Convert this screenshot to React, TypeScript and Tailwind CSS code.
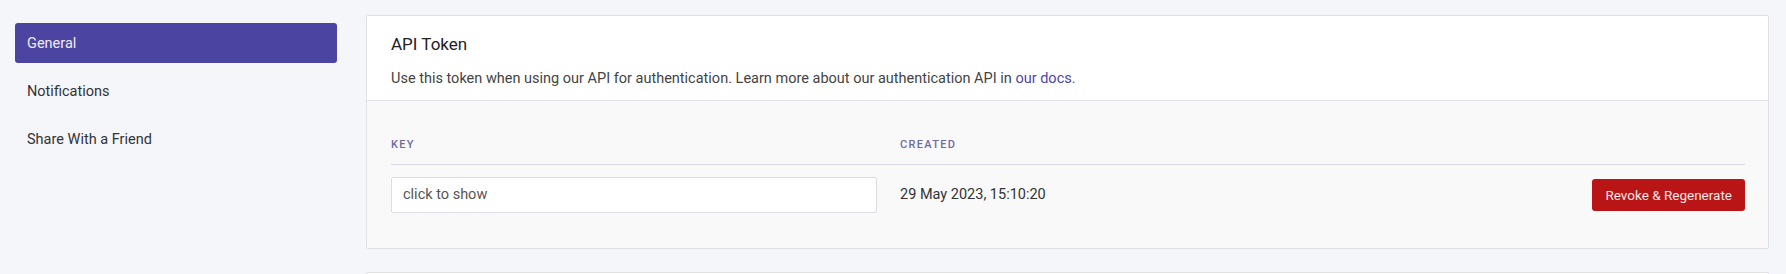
import React from "react";

const navItems = ["General", "Notifications", "Share With a Friend"];

function Sidebar() {
  return (
    <nav className="mt-2 flex w-[322px] shrink-0 flex-col gap-2">
      {navItems.map((item, index) => (
        <a
          key={item}
          href="#"
          className={
            index === 0
              ? "flex h-10 items-center rounded-[3px] bg-[#4b44a0] px-3 pt-px text-[14.5px] text-[#eeecf8]"
              : "flex h-10 items-center rounded-[3px] px-3 pt-px text-[14.5px] text-[#333333]"
          }
        >
          {item}
        </a>
      ))}
    </nav>
  );
}

function ApiTokenCard() {
  return (
    <section className="rounded-[2px] border border-[#e1e1e8] bg-white">
      <header className="border-b border-[#e1e1e8] pl-6 pr-[23px] pt-4 pb-[11px]">
        <h2 className="text-[17px] font-normal leading-6 text-[#222222]">API Token</h2>
        <p className="mt-[13px] text-[14.5px] leading-5 text-[#444444]">
          Use this token when using our API for authentication. Learn more about our authentication API in{" "}
          <a href="#" className="text-[#4c45a8]">our docs.</a>
        </p>
      </header>
      <div className="bg-[#f9f9f9] pl-6 pr-[23px] pt-[36px] pb-[35px]">
        <div className="grid grid-cols-[509px_1fr_auto] border-b border-[#d9d8e6] pb-[11px] text-[11px] font-medium uppercase leading-4 tracking-[1.3px] text-[#6f6ba2]">
          <span>Key</span>
          <span>Created</span>
          <span />
        </div>
        <div className="grid grid-cols-[509px_1fr_auto] items-center pt-3">
          <div className="flex h-9 w-[486px] items-center rounded-[2px] border border-[#dcdce2] bg-white px-[11px] text-[14.5px] text-[#555555]">
            click to show
          </div>
          <span className="text-[14.5px] text-[#333333]">29 May 2023, 15:10:20</span>
          <button className="flex h-8 items-center rounded-[3px] bg-[#b91416] px-[13px] text-[13.5px] text-[#f6e9e9]">
            Revoke &amp; Regenerate
          </button>
        </div>
      </div>
    </section>
  );
}

export default function App() {
  return (
    <div className="min-h-[274px] bg-[#f5f6fa] font-['Roboto',sans-serif]">
      <div className="flex gap-[29px] pt-[15px] pl-[15px] pr-[17px]">
        <Sidebar />
        <main className="flex flex-1 flex-col gap-[23px]">
          <ApiTokenCard />
          <section className="h-16 rounded-[2px] border border-[#e1e1e8] bg-white" />
        </main>
      </div>
    </div>
  );
}
